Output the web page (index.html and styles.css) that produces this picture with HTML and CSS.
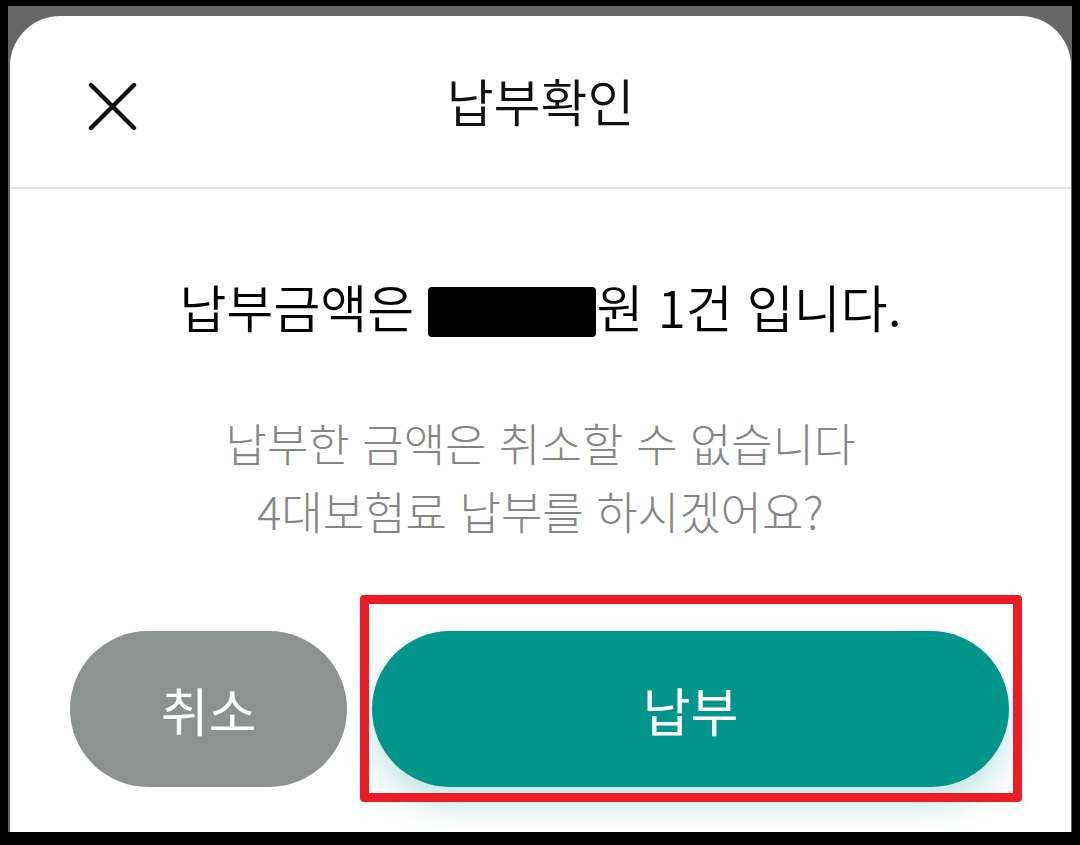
FILE: index.html
```html
<!DOCTYPE html>
<html lang="ko">
<head>
<meta charset="utf-8">
<title>납부확인</title>
<link rel="stylesheet" href="styles.css">
</head>
<body>
<div class="frame">
  <div class="screen">
    <div class="card">
      <header class="header">
        <button class="close" aria-label="닫기">
          <svg width="49" height="49" viewBox="0 0 49 49"><path d="M3 3 L46 46 M46 3 L3 46" stroke="#111" stroke-width="4.4" stroke-linecap="round" fill="none"/></svg>
        </button>
        <h1 class="title">납부확인</h1>
        <span></span>
      </header>
      <main class="content">
        <p class="amount">납부금액은 <span class="mask"></span>원 1건 입니다.</p>
        <p class="notice">납부한 금액은 취소할 수 없습니다<br>4대보험료 납부를 하시겠어요?</p>
        <div class="actions">
          <button class="btn btn-cancel">취소</button>
          <div class="pay-wrap">
            <button class="btn btn-pay">납부</button>
            <span class="highlight"></span>
          </div>
        </div>
      </main>
    </div>
  </div>
</div>
</body>
</html>
```

FILE: styles.css
```css
* { box-sizing: border-box; }
html, body { margin: 0; padding: 0; }
body {
  background: #000;
  width: 1080px;
  height: 845px;
  overflow: hidden;
  font-family: "Noto Sans CJK KR", "Noto Sans", sans-serif;
}
.frame {
  height: 845px;
  padding: 6px 8px 13px 8px;
}
.screen {
  height: 100%;
  background: #666;
  padding: 10px 1px 0 2px;
}
.card {
  height: 100%;
  background: #fff;
  border-radius: 50px 50px 0 0;
  display: flex;
  flex-direction: column;
}
.header {
  height: 173px;
  border-bottom: 2px solid #e3e3e3;
  display: grid;
  grid-template-columns: 1fr auto 1fr;
  align-items: center;
}
.close {
  justify-self: start;
  margin: 10px 0 0 78px;
  padding: 0;
  border: 0;
  background: none;
  width: 49px;
  height: 49px;
  display: flex;
}
.title {
  margin: 0 0 4px;
  font-size: 51px;
  font-weight: 350;
  color: #111;
  line-height: 60px;
}
.content {
  flex: 1;
  display: flex;
  flex-direction: column;
  align-items: center;
  padding-top: 86px;
}
.amount {
  margin: 0;
  font-size: 51px;
  font-weight: 350;
  line-height: 62px;
  color: #000;
  white-space: nowrap;
}
.mask {
  display: inline-block;
  width: 168px;
  height: 50px;
  background: #000;
  border-radius: 4px;
  vertical-align: -9px;
}
.notice {
  margin: 72px 0 0;
  font-size: 45px;
  font-weight: 300;
  line-height: 68px;
  color: #858585;
  text-align: center;
}
.actions {
  align-self: stretch;
  display: flex;
  gap: 25px;
  padding: 0 62px 0 60px;
  margin-top: 86px;
}
.btn {
  height: 156px;
  border: 0;
  border-radius: 78px;
  color: #fff;
  font-family: "Noto Sans CJK KR", "Noto Sans", sans-serif;
  font-size: 52px;
  font-weight: 400;
  padding: 0;
}
.btn-cancel {
  flex: 0 0 277px;
  background: #8d9291;
}
.pay-wrap {
  flex: 1;
  position: relative;
  display: flex;
}
.btn-pay {
  flex: 1;
  background: #01958b;
  box-shadow: 0 20px 30px rgba(0, 150, 140, 0.22);
}
.highlight {
  position: absolute;
  top: -36px;
  left: -12px;
  right: -13px;
  bottom: -15px;
  border: 9px solid #ec1c24;
  border-radius: 4px;
  pointer-events: none;
}
```
